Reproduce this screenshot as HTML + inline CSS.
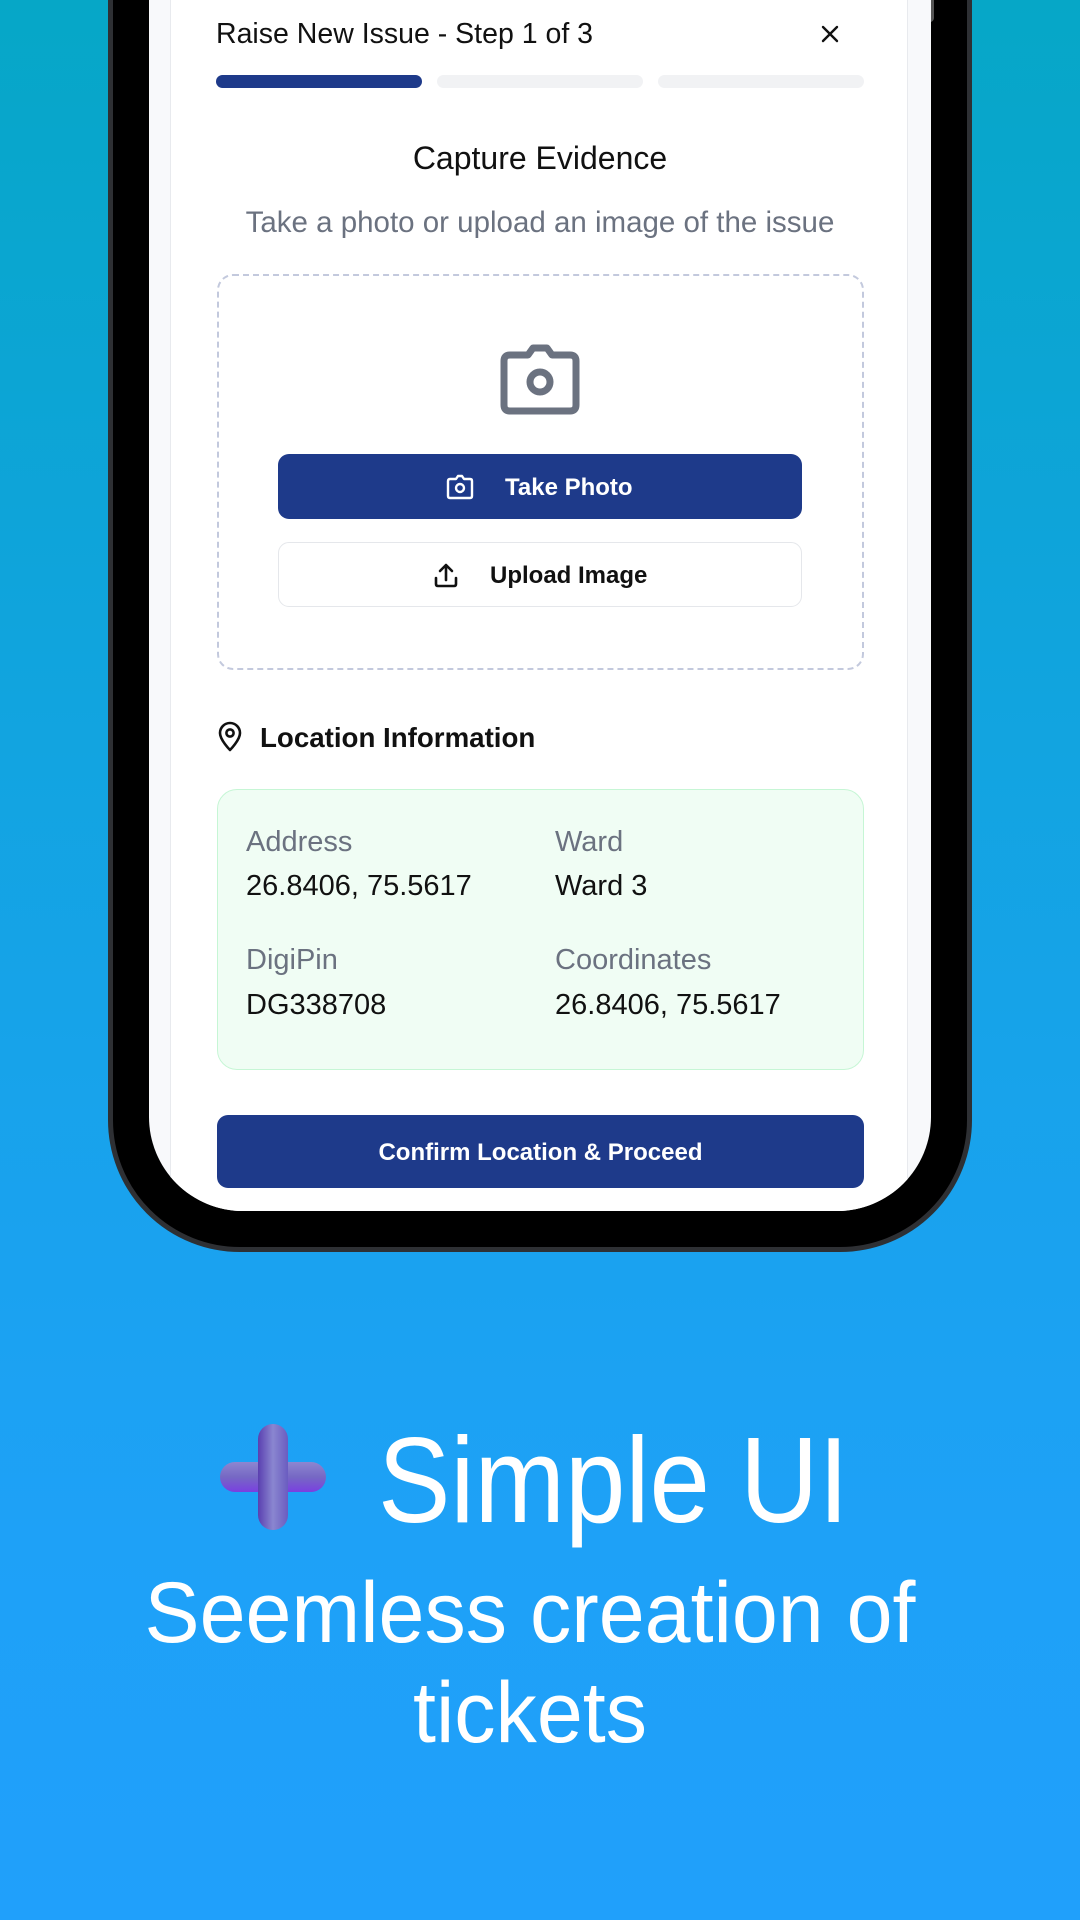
<!DOCTYPE html>
<html><head><meta charset="utf-8"><style>
*{margin:0;padding:0;box-sizing:border-box}
body{width:1080px;height:1920px;overflow:hidden;font-family:"Liberation Sans",sans-serif;
background:linear-gradient(180deg,#06a7c7 0%,#0fa4db 30%,#17a3ea 55%,#1ea1f7 80%,#20a0fb 100%);position:relative}
.frame{position:absolute;left:108px;top:-150px;width:864px;height:1402px;background:#000;border:5px solid #2e3034;border-radius:0 0 132px 132px}
.screen{position:absolute;left:149px;top:-100px;width:782px;height:1311px;background:#f8f9fb;border-radius:0 0 94px 94px;overflow:hidden}
.card{position:absolute;left:21px;top:0;width:738px;height:1400px;background:#fff;border-left:1px solid #e8eaee;border-right:1px solid #e8eaee}
.abs{position:absolute}
.t{color:#111;white-space:nowrap}
</style></head><body>
<div class="frame"></div>
<div class="abs" style="left:926px;top:0;width:8px;height:22px;background:#555;border-radius:0 0 4px 4px"></div>
<div class="screen"><div class="card"></div></div>

<div class="abs t" style="left:216px;top:18px;font-size:28.5px">Raise New Issue - Step 1 of 3</div>
<svg class="abs" style="left:818px;top:22px" width="24" height="24" viewBox="0 0 24 24"><path d="M5 5L19 19M19 5L5 19" stroke="#111" stroke-width="2.4" stroke-linecap="round"/></svg>
<div class="abs" style="left:216px;top:75px;width:206px;height:13px;border-radius:7px;background:#1e3a8a"></div>
<div class="abs" style="left:437px;top:75px;width:206px;height:13px;border-radius:7px;background:#f1f2f4"></div>
<div class="abs" style="left:658px;top:75px;width:206px;height:13px;border-radius:7px;background:#f1f2f4"></div>

<div class="abs t" style="left:0;width:1080px;text-align:center;top:140px;font-size:32px">Capture Evidence</div>
<div class="abs t" style="left:0;width:1080px;text-align:center;top:206px;font-size:29.5px;color:#6b7280">Take a photo or upload an image of the issue</div>

<div class="abs" style="left:217px;top:274px;width:647px;height:396px;border:2.5px dashed #c3c9dd;border-radius:16px"></div>
<svg class="abs" style="left:498px;top:343px" width="84" height="72" viewBox="0 0 84 72"><path d="M30 12L35 5H49L54 12H72Q78 12 78 18V62Q78 68 72 68H12Q6 68 6 62V18Q6 12 12 12Z" fill="none" stroke="#6b7280" stroke-width="7" stroke-linejoin="round"/><circle cx="42" cy="39" r="10" fill="none" stroke="#6b7280" stroke-width="7"/></svg>

<div class="abs" style="left:278px;top:454px;width:524px;height:65px;background:#1e3a8a;border-radius:11px"></div>
<svg class="abs" style="left:446px;top:474px" width="28" height="26" viewBox="0 0 28 26"><path d="M10 5L12 2H16L18 5H24Q26 5 26 7V22Q26 24 24 24H4Q2 24 2 22V7Q2 5 4 5Z" fill="none" stroke="#fff" stroke-width="2.4" stroke-linejoin="round"/><circle cx="14" cy="14" r="4" fill="none" stroke="#fff" stroke-width="2.4"/></svg>
<div class="abs t" style="left:505px;top:474px;font-size:24px;font-weight:bold;color:#fff">Take Photo</div>

<div class="abs" style="left:278px;top:542px;width:524px;height:65px;background:#fff;border:1.5px solid #e5e7eb;border-radius:11px"></div>
<svg class="abs" style="left:432px;top:561px" width="28" height="28" viewBox="0 0 28 28"><path d="M14 19V4M8 10L14 4L20 10M4 17V23Q4 25 6 25H22Q24 25 24 23V17" fill="none" stroke="#111" stroke-width="2.6" stroke-linecap="round" stroke-linejoin="round"/></svg>
<div class="abs t" style="left:490px;top:562px;font-size:24px;font-weight:bold">Upload Image</div>

<svg class="abs" style="left:216px;top:721px" width="28" height="32" viewBox="0 0 28 32"><path d="M14 29C14 29 24 19 24 12A10 10 0 0 0 4 12C4 19 14 29 14 29Z" fill="none" stroke="#111" stroke-width="2.6" stroke-linejoin="round"/><circle cx="14" cy="12" r="3.6" fill="none" stroke="#111" stroke-width="2.6"/></svg>
<div class="abs t" style="left:260px;top:722px;font-size:27.7px;font-weight:bold">Location Information</div>

<div class="abs" style="left:217px;top:789px;width:647px;height:281px;background:#f0fdf4;border:1.5px solid #c6f6d5;border-radius:20px"></div>
<div class="abs t" style="left:246px;top:826px;font-size:29px;color:#6b7280">Address</div>
<div class="abs t" style="left:246px;top:870px;font-size:29px">26.8406, 75.5617</div>
<div class="abs t" style="left:555px;top:826px;font-size:29px;color:#6b7280">Ward</div>
<div class="abs t" style="left:555px;top:870px;font-size:29px">Ward 3</div>
<div class="abs t" style="left:246px;top:944px;font-size:29px;color:#6b7280">DigiPin</div>
<div class="abs t" style="left:246px;top:989px;font-size:29px">DG338708</div>
<div class="abs t" style="left:555px;top:944px;font-size:29px;color:#6b7280">Coordinates</div>
<div class="abs t" style="left:555px;top:989px;font-size:29px">26.8406, 75.5617</div>

<div class="abs" style="left:217px;top:1115px;width:647px;height:73px;background:#1e3a8a;border-radius:11px"></div>
<div class="abs t" style="left:217px;width:647px;text-align:center;top:1139px;font-size:24px;font-weight:bold;color:#fff">Confirm Location &amp; Proceed</div>

<svg class="abs" style="left:218px;top:1422px" width="110" height="110" viewBox="0 0 110 110">
<defs><linearGradient id="g1" x1="0" y1="0" x2="0" y2="1"><stop offset="0" stop-color="#8d86d0"/><stop offset="0.5" stop-color="#7668c4"/><stop offset="1" stop-color="#7a3fe0"/></linearGradient>
<linearGradient id="g2" x1="0" y1="0" x2="1" y2="0"><stop offset="0" stop-color="#5a3fb0"/><stop offset="0.5" stop-color="#8a86d0"/><stop offset="1" stop-color="#6a5cc0"/></linearGradient></defs>
<rect x="2" y="40" width="106" height="30" rx="15" fill="url(#g1)"/>
<rect x="40" y="2" width="30" height="106" rx="15" fill="url(#g2)"/>
</svg>
<div class="abs" style="left:378px;top:1407px;font-size:122px;color:#fff;white-space:nowrap;line-height:1.2;transform:scaleX(0.89);transform-origin:0 0">Simple UI</div>
<div class="abs" style="left:-10px;width:1080px;text-align:center;top:1563px;font-size:86px;color:#fff;line-height:100px;transform:scaleX(0.96)">Seemless creation of<br>tickets</div>
</body></html>
